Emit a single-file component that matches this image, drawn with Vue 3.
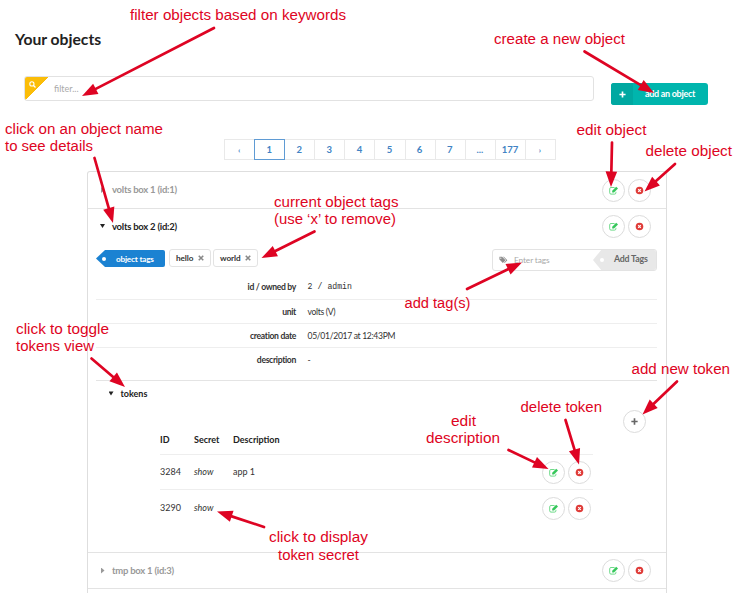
<script setup>
import { h } from 'vue'

const pages = ['‹', '1', '2', '3', '4', '5', '6', '7', '...', '177', '›']

const details = [
  { label: 'id / owned by', value: '2  /  admin', mono: true },
  { label: 'unit', value: 'volts (V)' },
  { label: 'creation date', value: '05/01/2017 at 12:43PM' },
  { label: 'description', value: '-' },
]

const tokens = [
  { id: '3284', description: 'app 1' },
  { id: '3290', description: '' },
]

// Edit and delete round buttons shared by objects and tokens
const RowActions = () =>
  h('div', { class: 'actions' }, [
    h('button', { class: 'circle', 'aria-label': 'edit' }, [
      h('svg', { viewBox: '0 0 9 9', width: 9, height: 9 }, [
        h('path', {
          d: 'M5.6 1.5H2Q.7 1.5 .7 2.8V6.8Q.7 8.1 2 8.1H5.6Q6.9 8.1 6.9 6.8V5.8',
          fill: 'none', stroke: '#5fd67d', 'stroke-width': 0.9,
        }),
        h('path', { d: 'M3.2 6.5V4.7L7.2 .7L9 2.5L5 6.5Z', fill: '#35c75a' }),
      ]),
    ]),
    h('button', { class: 'circle', 'aria-label': 'delete' }, [
      h('svg', { viewBox: '0 0 9 9', width: 9, height: 9 }, [
        h('circle', { cx: 4.5, cy: 4.5, r: 3.8, fill: '#df3b38' }),
        h('path', { d: 'M3.2 3.2L5.8 5.8M5.8 3.2L3.2 5.8', stroke: '#fff', 'stroke-width': 1.2 }),
      ]),
    ]),
  ])

// Callout texts: x, baseline y, rendered width
const notes = [
  ['filter objects based on keywords', 130, 20, 216],
  ['create a new object', 494, 44, 131],
  ['click on an object name', 5, 134, 158],
  ['to see details', 5, 151, 88],
  ['edit object', 576.5, 135, 70],
  ['delete object', 645.5, 156, 86.5],
  ['current object tags', 274, 207, 124.5],
  ['(use ‘x’ to remove)', 274, 224, 122],
  ['add tag(s)', 404.5, 308, 66],
  ['click to toggle', 16, 334, 93],
  ['tokens view', 16, 351, 78],
  ['add new token', 631.5, 374, 98.5],
  ['delete token', 520.5, 412, 81.5],
  ['edit', 451, 426, 25],
  ['description', 426, 443, 74],
  ['click to display', 269, 542, 99],
  ['token secret', 278, 560, 81],
]

// Callout arrows: tail x/y, tip x/y
const arrows = [
  [214, 28, 82, 96],
  [584.5, 51.5, 654, 93],
  [94.5, 158, 113, 223],
  [612, 142.5, 611, 187],
  [675, 164, 644.5, 191.5],
  [314.5, 231.5, 261.5, 258],
  [467, 289, 522, 262.5],
  [91.5, 358.5, 125, 387],
  [677, 381.5, 642.5, 414.5],
  [565.5, 420, 579, 464.5],
  [508.5, 450, 548.5, 469],
  [264, 527, 217, 511.5],
].map(([x1, y1, x2, y2]) => {
  const len = Math.hypot(x2 - x1, y2 - y1)
  const ux = (x2 - x1) / len
  const uy = (y2 - y1) / len
  const bx = x2 - ux * 15.5
  const by = y2 - uy * 15.5
  return {
    x1, y1, bx, by,
    head: `${x2},${y2} ${bx - uy * 5.8},${by + ux * 5.8} ${bx + uy * 5.8},${by - ux * 5.8}`,
  }
})
</script>

<template>
  <main class="page">
    <h1>Your objects</h1>
    <div class="toolbar">
      <div class="filter">
        <span class="corner">
          <svg viewBox="0 0 14 14" width="7" height="7">
            <circle cx="5.8" cy="5.8" r="4.2" fill="none" stroke="#fff" stroke-width="2.2" />
            <path d="M9 9L13 13" stroke="#fff" stroke-width="2.5" />
          </svg>
        </span>
        <span class="placeholder">filter...</span>
      </div>
      <button class="add">
        <span class="plus"><svg viewBox="0 0 8 8" width="7" height="7"><path d="M4 .5V7.5M.5 4H7.5" stroke="#fff" stroke-width="1.9" /></svg></span>
        <span class="add-label">add an object</span>
      </button>
    </div>

    <nav class="pages">
      <a v-for="p in pages" :key="p" :class="{ active: p === '1', edge: p === '‹' || p === '›' }">{{ p }}</a>
    </nav>

    <section class="accordion">
      <div class="row first">
        <i class="caret right"></i><span class="name">volts box 1 (id:1)</span>
        <RowActions />
      </div>

      <div class="object">
        <div class="row open">
          <i class="caret down"></i><span class="name">volts box 2 (id:2)</span>
          <RowActions />
        </div>
        <div class="tags">
          <span class="tag-title"><i></i><b>object tags</b></span>
          <span v-for="t in ['hello', 'world']" :key="t" class="tag">{{ t }}
            <svg viewBox="0 0 8 8" width="6" height="6"><path d="M1 1L7 7M7 1L1 7" stroke="#888" stroke-width="2.1" /></svg>
          </span>
          <div class="tag-input">
            <svg class="tags-icon" viewBox="0 0 20 16" width="9" height="8">
              <path d="M1 1H7L14.5 8.5L8.5 14.5L1 7Z" fill="#8b8b8b" />
              <path d="M9 1H10.8L18.5 8.5L12.6 14.5L11.4 13.3L16 8.5Z" fill="#8b8b8b" />
              <circle cx="4" cy="4" r="1.3" fill="#fff" />
            </svg>
            <span class="placeholder">Enter tags</span>
            <span class="tag-add"><i></i><b>Add Tags</b></span>
          </div>
        </div>
        <dl class="details">
          <div v-for="d in details" :key="d.label">
            <dt>{{ d.label }}</dt>
            <dd :class="{ mono: d.mono }">{{ d.value }}</dd>
          </div>
        </dl>
        <div class="tokens-panel">
          <div class="tokens-title"><i class="caret down"></i><span>tokens</span></div>
          <div class="new-token">
            <button class="circle" aria-label="add token"><svg viewBox="0 0 8 8" width="7" height="7"><path d="M4 .4V7.6M.4 4H7.6" stroke="#666" stroke-width="1.9" /></svg></button>
          </div>
          <div class="tokens">
            <div class="token head"><b>ID</b><b>Secret</b><b>Description</b></div>
            <div v-for="t in tokens" :key="t.id" class="token">
              <span>{{ t.id }}</span><em>show</em><span>{{ t.description }}</span>
              <RowActions />
            </div>
          </div>
        </div>
      </div>

      <div class="row last">
        <i class="caret right"></i><span class="name">tmp box 1 (id:3)</span>
        <RowActions />
      </div>
    </section>

    <svg class="callouts" viewBox="0 0 756 594" width="756" height="594">
      <g v-for="(a, i) in arrows" :key="i">
        <line :x1="a.x1" :y1="a.y1" :x2="a.bx" :y2="a.by" />
        <polygon :points="a.head" />
      </g>
      <text v-for="n in notes" :key="n[0]" :x="n[1]" :y="n[2]" :textLength="n[3]" lengthAdjust="spacingAndGlyphs">{{ n[0] }}</text>
    </svg>
  </main>
</template>

<style>
body { background: #fff; overflow: hidden; }
.actions { display: flex; gap: 3px; margin-left: auto; }
.circle {
  display: flex; align-items: center; justify-content: center;
  width: 23px; height: 23px; padding: 0; box-sizing: border-box;
  border: 1px solid #dcdcdc; border-radius: 50%; background: #fff;
}
.circle svg { display: block; flex: none; }
</style>

<style scoped>
* { box-sizing: border-box; }
.page {
  position: relative; width: 756px; height: 594px; overflow: hidden;
  display: flex; flex-direction: column;
  font-family: Lato, "Liberation Sans", sans-serif; font-size: 9px; line-height: 12px; color: #333;
}
h1 { margin: 0; padding: 28px 0 0 15px; height: 76px; font-size: 15.7px; line-height: 22px; font-weight: 700; color: #222; }
.toolbar { display: flex; height: 62px; padding-left: 24px; gap: 17px; }
.filter { display: flex; align-items: center; width: 570px; height: 25px; border: 1px solid #e2e2e2; border-radius: 3px; overflow: hidden; }
.corner { width: 24px; height: 24px; padding: 4px 0 0 4px; line-height: 0; background: linear-gradient(135deg, #fbbd08 50%, transparent 50%); }
.placeholder { color: #aaa; }
.filter .placeholder { margin-left: 5px; }
.add { display: flex; width: 97px; height: 22px; margin-top: 7px; padding: 0; border: 0; border-radius: 3px; overflow: hidden; background: #00b5ad; color: #fff; font: 700 9px/22px Lato, sans-serif; }
.plus { display: flex; align-items: center; justify-content: center; width: 22px; height: 22px; background: #00a8a1; }
.add-label { flex: 1; text-align: center; padding-right: 1px; letter-spacing: -.3px; white-space: nowrap; }
.pages { display: flex; width: 332px; height: 21px; margin: 1px 0 0 224px; border: 1px solid #e9e9e9; }
.pages a { flex: 1; display: flex; align-items: center; justify-content: center; padding-right: 1px; border-right: 1px solid #e9e9e9; color: #4183c4; font-size: 9.5px; font-weight: 700; }
.pages a:last-child { border-right: 0; }
.pages a.edge { font-size: 8px; }
.pages a.active { margin: -1px 0 -1px -1px; border: 1px solid #5f9bd4; }
.accordion { width: 580px; height: 422px; margin: 11px 0 0 87px; border: 1px solid #dedede; border-bottom: 0; border-radius: 3px 3px 0 0; }
.row { display: flex; align-items: center; height: 36px; padding: 0 15px 0 12px; font-weight: 700; font-size: 9.5px; color: #999; }
.row.first, .row.last { border-bottom: 1px solid #e3e3e3; }
.row.first { height: 37px; }
.row.last { height: 37px; border-top: 1px solid #e3e3e3; }
.row.open { height: 35px; color: #222; }
.name { margin-left: 7px; letter-spacing: -.25px; }
.caret { width: 5px; height: 6px; flex: none; }
.right { background: #999; clip-path: polygon(20% 0, 90% 50%, 20% 100%); }
.down { background: #222; clip-path: polygon(0 10%, 100% 10%, 50% 75%); }
.object { height: 343px; }
.tags { display: flex; height: 30px; padding: 6px 9px 0 8px; gap: 3px; align-items: flex-start; }
.tag-title { display: flex; align-items: center; width: 69px; height: 17px; background: #1b82d2; color: #fff; border-radius: 2px; clip-path: polygon(9px 0, 100% 0, 100% 100%, 9px 100%, 0 50%); }
.tag-title i, .tag-add i { width: 4px; height: 4px; border-radius: 50%; background: #fff; }
.tag-title i { margin-left: 6px; }
.tag-title b { margin-left: 10px; font-size: 8.2px; letter-spacing: -.2px; white-space: nowrap; }
.tag { display: flex; align-items: center; justify-content: space-between; width: 42px; height: 18px; padding: 0 6px; border: 1px solid #e3e3e3; border-radius: 3px; font-size: 8.2px; letter-spacing: -.1px; font-weight: 700; margin-top: -1px; }
.tag + .tag { width: 45px; margin-left: -1px; }
.tag-title + .tag { width: 42px; margin-left: 1px; }
.tag-input { display: flex; align-items: center; width: 165px; height: 22px; margin-left: auto; margin-top: -1px; border: 1px solid #e3e3e3; border-radius: 3px; overflow: hidden; }
.tags-icon { margin-left: 6px; }
.tag-input .placeholder { margin-left: 6px; font-size: 8.4px; letter-spacing: -.15px; }
.tag-add { display: flex; align-items: center; width: 63px; height: 22px; margin-left: auto; background: #e8e8e8; clip-path: polygon(9px 0, 100% 0, 100% 100%, 9px 100%, 0 50%); color: #666; }
.tag-add i { margin-left: 7px; }
.tag-add b { margin: -3px 0 0 10px; font-size: 8.8px; letter-spacing: -.2px; white-space: nowrap; }
.details { margin: 0 9px 0 8px; height: 106px; }
.details div { display: flex; height: 24px; border-bottom: 1px solid #eee; font-size: 8.6px; letter-spacing: -.33px; align-items: center; }
.details div:first-child { height: 26px; padding-top: 1px; }
.details div:last-child { border: 0; }
dt { width: 200px; text-align: right; font-weight: 700; }
dd { margin: 0 0 0 11.5px; white-space: pre; }
dd.mono { font-family: "Liberation Mono", monospace; font-size: 8.2px; letter-spacing: 0; word-spacing: -2.4px; }
.tokens-panel { height: 172px; margin: 0 9px 0 8px; border-top: 1px solid #e4e4e4; }
.tokens-title { display: flex; align-items: center; gap: 7px; height: 26px; padding-left: 12.5px; color: #222; font-weight: 700; }
.new-token { display: flex; justify-content: flex-end; height: 18px; padding: 3px 11px 0 0; }
.tokens { width: 433px; margin-left: 64px; }
.token { display: grid; grid-template-columns: 34px 39px 1fr auto; align-items: center; height: 36px; border-bottom: 1px solid #eee; }
.token.head { height: 30px; color: #222; }
.token :deep(.actions) { padding-right: 2px; }
.token:nth-child(2) { height: 35px; }
.token:last-child { height: 36px; border: 0; }
.callouts { position: absolute; inset: 0; }
.callouts line { stroke: #de0423; stroke-width: 2.7; stroke-linecap: round; }
.callouts polygon { fill: #de0423; }
.callouts text { fill: #de0423; font-family: "Liberation Sans", sans-serif; font-size: 15.2px; }
</style>
